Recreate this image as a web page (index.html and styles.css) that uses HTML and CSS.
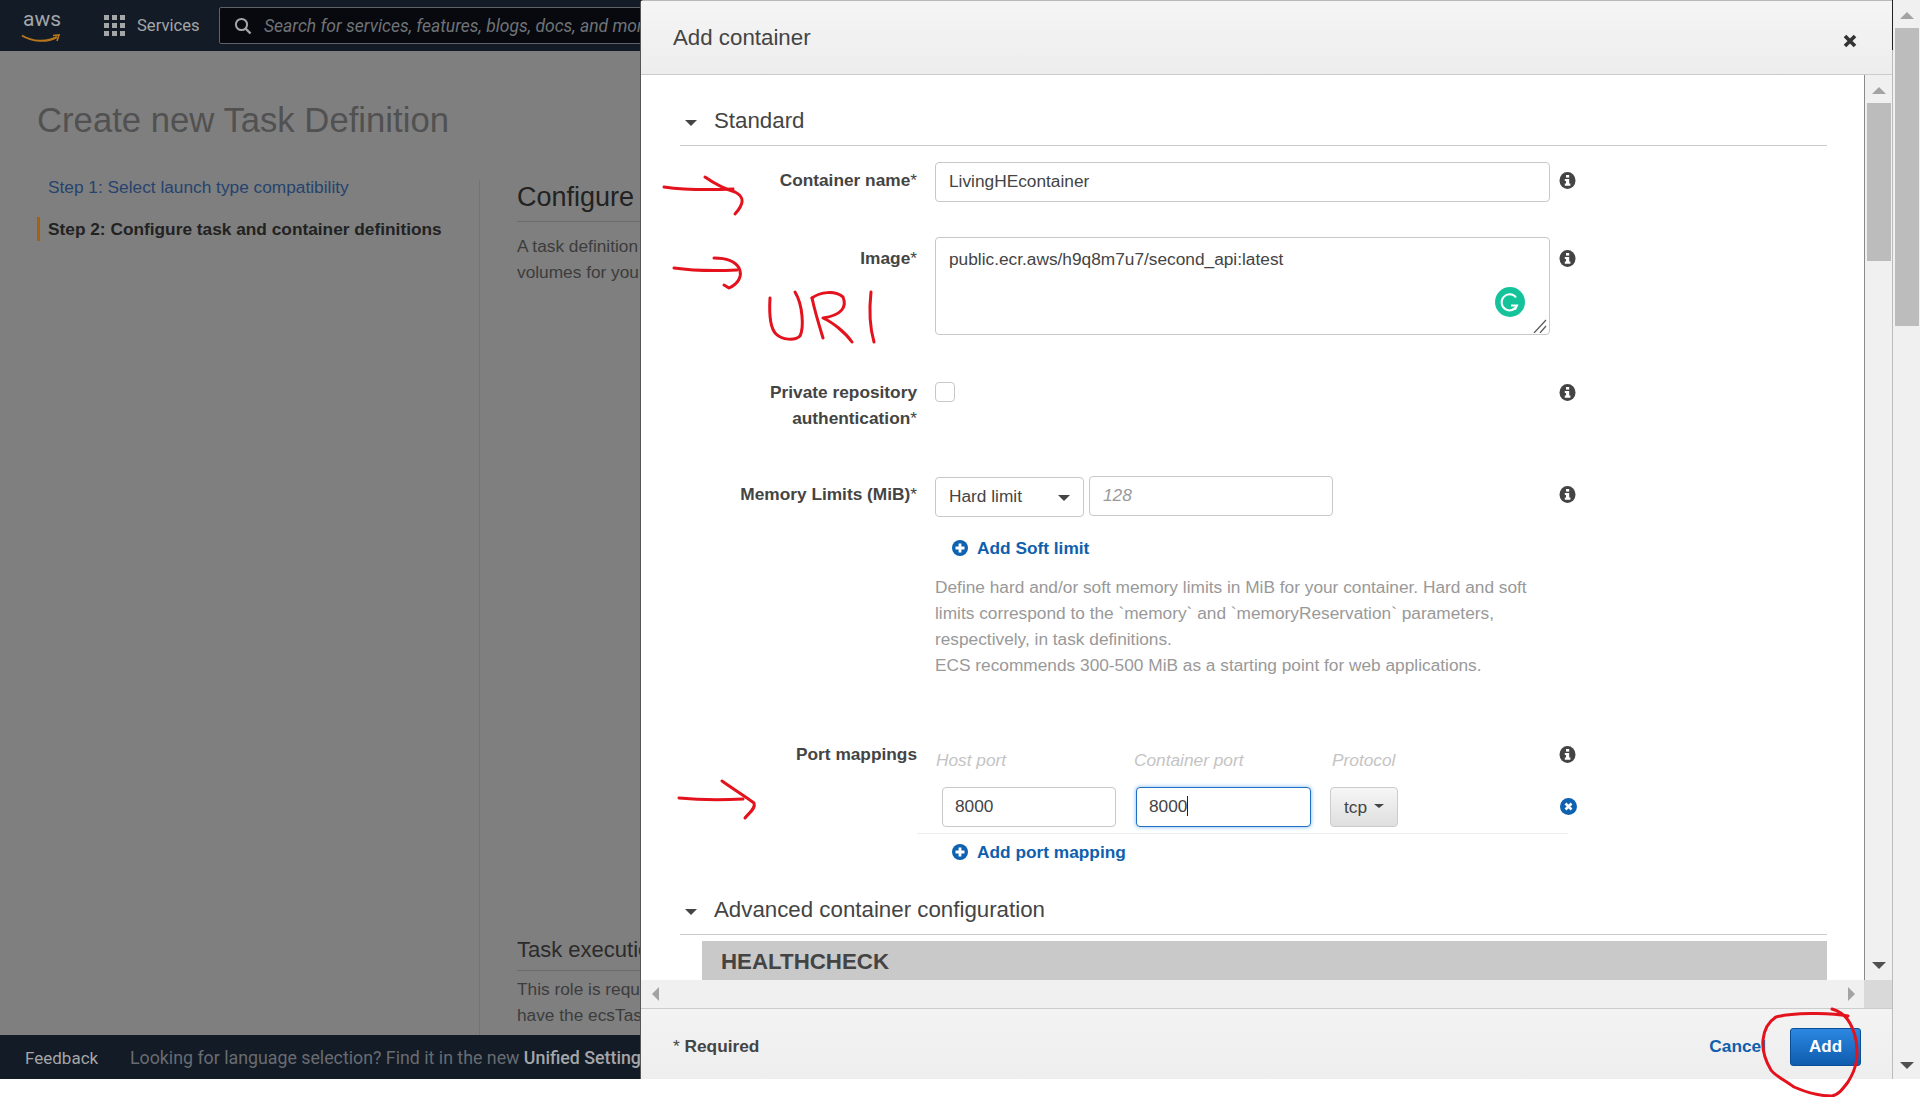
FILE: index.html
```html
<!DOCTYPE html>
<html lang="en">
<head>
    <meta charset="UTF-8">
    <title>Create new Task Definition</title>
    <link rel="stylesheet" href="styles.css">
</head>
<body>
    <div class="app">
        <header class="topbar">
            <div class="logo">
                <span class="logo-text">aws</span>
                <svg class="logo-smile" width="40" height="9" viewBox="0 0 40 9"><path d="M1 1.5C11 8 26 8.5 36 3" fill="none" stroke="#b8761c" stroke-width="2"/><path d="M32 1.5l6-.5-2 6" fill="none" stroke="#b8761c" stroke-width="1.6"/></svg>
            </div>
            <svg class="grid-icon" width="21" height="21" viewBox="0 0 21 21" fill="#a4a6a8">
                <rect width="5" height="5"/><rect x="8" width="5" height="5"/><rect x="16" width="5" height="5"/>
                <rect y="8" width="5" height="5"/><rect x="8" y="8" width="5" height="5"/><rect x="16" y="8" width="5" height="5"/>
                <rect y="16" width="5" height="5"/><rect x="8" y="16" width="5" height="5"/><rect x="16" y="16" width="5" height="5"/>
            </svg>
            <span class="services">Services</span>
            <div class="searchbox">
                <svg width="18" height="18" viewBox="0 0 18 18"><circle cx="7.5" cy="7.5" r="5.6" fill="none" stroke="#a4a6a8" stroke-width="2"/><path d="M11.5 11.5L16.5 16.5" stroke="#a4a6a8" stroke-width="2.4"/></svg>
                <span class="search-hint">Search for services, features, blogs, docs, and mor</span>
            </div>
        </header>

        <main class="main">
            <h1 class="page-title">Create new Task Definition</h1>
            <div class="columns">
                <nav class="steps">
                    <a class="step">Step 1: Select launch type compatibility</a>
                    <a class="step step-active">Step 2: Configure task and container definitions</a>
                </nav>
                <section class="wizard">
                    <h2 class="wizard-title">Configure</h2>
                    <p class="wizard-text">A task definition<br>volumes for your</p>
                    <h3 class="wizard-sub">Task execution</h3>
                    <p class="wizard-text wizard-text-tight">This role is required<br>have the ecsTask</p>
                </section>
            </div>
        </main>

        <footer class="bottombar">
            <span class="feedback">Feedback</span>
            <span class="lang-note">Looking for language selection? Find it in the new <b>Unified Settings</b></span>
        </footer>

        <div class="overlay">
            <div class="modal">
                <div class="modal-head">
                    <span class="modal-title">Add container</span>
                    <svg class="modal-close" width="14" height="14" viewBox="0 0 14 14"><path d="M2 2L12 12M12 2L2 12" stroke="#333" stroke-width="3.6"/></svg>
                </div>

                <div class="modal-mid">
                    <div class="modal-left">
                        <div class="modal-content">
                            <div class="section-head section-first"><i class="arrow-down"></i>Standard</div>

                            <div class="row">
                                <label class="row-label">Container name<span class="star">*</span></label>
                                <div class="field"><input class="text-input" type="text" value="LivingHEcontainer"></div>
                                <svg class="info" viewBox="0 0 17 17"><use href="#icon-info"/></svg>
                            </div>

                            <div class="row row-image">
                                <label class="row-label">Image<span class="star">*</span></label>
                                <div class="field field-rel">
                                    <textarea class="text-area">public.ecr.aws/h9q8m7u7/second_api:latest</textarea>
                                    <svg class="grammarly" width="30" height="30" viewBox="0 0 30 30"><circle cx="15" cy="15" r="15" fill="#15c39a"/><path d="M21 10.5A8 8 0 1 0 22 18.5H16M22 18.5l-2 4" fill="none" stroke="#fff" stroke-width="2"/></svg>
                                    <svg class="grip" width="14" height="14" viewBox="0 0 14 14"><path d="M1 14L13 1M7 14L13 7" stroke="#555" stroke-width="1.2"/></svg>
                                </div>
                                <svg class="info" viewBox="0 0 17 17"><use href="#icon-info"/></svg>
                            </div>

                            <div class="row row-private">
                                <label class="row-label">Private repository authentication<span class="star">*</span></label>
                                <div class="field"><span class="checkbox"></span></div>
                                <svg class="info" viewBox="0 0 17 17"><use href="#icon-info"/></svg>
                            </div>

                            <div class="row row-memory">
                                <label class="row-label">Memory Limits (MiB)<span class="star">*</span></label>
                                <div class="field field-memory">
                                    <div class="select-box">Hard limit<i class="arrow-down arrow-select"></i></div>
                                    <input class="text-input limit-input" type="text" placeholder="128">
                                </div>
                                <svg class="info" viewBox="0 0 17 17"><use href="#icon-info"/></svg>
                            </div>
                            <a class="add-link add-soft"><svg width="16" height="16" viewBox="0 0 16 16"><use href="#icon-plus"/></svg>Add Soft limit</a>
                            <p class="help-text">Define hard and/or soft memory limits in MiB for your container. Hard and soft limits correspond to the `memory` and `memoryReservation` parameters, respectively, in task definitions.<br>ECS recommends 300-500 MiB as a starting point for web applications.</p>

                            <div class="row row-ports">
                                <label class="row-label">Port mappings</label>
                                <div class="field port-head">
                                    <span class="port-col port-col-host">Host port</span>
                                    <span class="port-col port-col-container">Container port</span>
                                    <span class="port-col">Protocol</span>
                                </div>
                                <svg class="info" viewBox="0 0 17 17"><use href="#icon-info"/></svg>
                            </div>
                            <div class="port-row">
                                <input class="text-input port-host" type="text" value="8000">
                                <div class="text-input port-focus">8000<span class="caret"></span></div>
                                <div class="proto-btn">tcp<i class="arrow-down arrow-small"></i></div>
                                <svg class="port-remove" width="17" height="17" viewBox="0 0 17 17"><circle cx="8.5" cy="8.5" r="8.5" fill="#0f62b0"/><path d="M5.5 5.5l6 6M11.5 5.5l-6 6" stroke="#fff" stroke-width="2.6"/></svg>
                            </div>
                            <a class="add-link add-port"><svg width="16" height="16" viewBox="0 0 16 16"><use href="#icon-plus"/></svg>Add port mapping</a>

                            <div class="section-head section-adv"><i class="arrow-down"></i>Advanced container configuration</div>
                            <div class="band">HEALTHCHECK</div>
                        </div>
                        <div class="hbar"><i class="tri-left"></i><i class="tri-right"></i></div>
                    </div>
                    <div class="vbar vbar-inner">
                        <i class="tri-up"></i>
                        <div class="thumb thumb-inner"></div>
                        <i class="tri-down"></i>
                        <div class="vbar-corner"></div>
                    </div>
                </div>

                <div class="modal-foot">
                    <span class="required">* <b>Required</b></span>
                    <a class="cancel">Cancel</a>
                    <button class="add-btn" type="button">Add</button>
                </div>
            </div>

            <div class="vbar vbar-outer">
                <i class="tri-up"></i>
                <div class="thumb thumb-outer"></div>
                <i class="tri-down"></i>
            </div>
        </div>

        <!-- hand drawn marks on the screenshot -->
        <svg class="marks" width="1920" height="1097" viewBox="0 0 1920 1097">
            <path d="M664 187C685 190 710 190 733 189"/>
            <path d="M705 177C715 184 725 189 735 192C745 197 744 204 735 214"/>
            <path d="M674 268C695 271 715 271 737 270"/>
            <path d="M714 258C725 258 735 261 739 268C743 276 738 284 729 288L724 285"/>
            <path d="M770 298C769 315 770 328 776 334C782 340 795 341 800 336C804 328 803 305 795 292"/>
            <path d="M812 298C815 312 819 325 823 338"/>
            <path d="M812 298C820 292 835 290 843 297C847 307 842 315 823 318C832 322 845 332 852 342"/>
            <path d="M871 292C869 310 870 328 874 342"/>
            <path d="M679 798C700 800 722 800 743 799"/>
            <path d="M722 781C733 789 745 796 754 803C756 808 750 812 745 818"/>
            <path d="M1832 1009C1845 1013 1852 1022 1856 1040C1858 1055 1858 1066 1848 1082C1842 1090 1838 1095 1832 1096C1818 1096 1803 1091 1794 1087C1785 1080 1775 1076 1771 1070C1765 1060 1762 1050 1763 1040C1764 1030 1768 1022 1776 1017C1790 1013 1830 1012 1848 1016"/>
        </svg>
    </div>

    <svg width="0" height="0" class="defs">
        <symbol id="icon-info" viewBox="0 0 17 17">
            <ellipse cx="8.5" cy="8.5" rx="8" ry="8.5" fill="#444"/>
            <rect x="7" y="3" width="3.2" height="2.6" fill="#fff"/>
            <path d="M5.8 7h4.4v4.6h1.2v2.2H5.8v-2.2h1.2V9H5.8z" fill="#fff"/>
        </symbol>
        <symbol id="icon-plus" viewBox="0 0 16 16">
            <circle cx="8" cy="8" r="8" fill="#0f62b0"/>
            <path d="M8 3.5v9M3.5 8h9" stroke="#fff" stroke-width="2.8"/>
        </symbol>
    </svg>
</body>
</html>
```

FILE: styles.css
```css
* {
    box-sizing: border-box;
}
html, body {
    margin: 0;
    padding: 0;
    background: #fff;
}
body {
    font-family: "Liberation Sans", Arial, sans-serif;
    font-size: 17.3px;
    color: #444;
    height: 1097px;
    overflow: hidden;
}
.defs {
    position: absolute;
}
.app {
    position: relative;
    width: 1920px;
    height: 1079px;
    display: flex;
    flex-direction: column;
}

/* top bar */
.topbar {
    height: 51px;
    background: #131b27;
    display: flex;
    align-items: center;
    font-family: Roboto, sans-serif;
    color: #a4a6a8;
}
.logo {
    width: 104px;
    padding-left: 23px;
    height: 36px;
    position: relative;
}
.logo-text {
    font-size: 21px;
    line-height: 23px;
    display: block;
    color: #a4a6a8;
}
.logo-smile {
    position: absolute;
    left: 21px;
    top: 26px;
}
.services {
    margin-left: 12px;
    font-size: 16.6px;
    width: 82px;
}
.searchbox {
    flex: 1;
    height: 37px;
    background: #07090e;
    border: 1px solid #5f6368;
    border-radius: 2px;
    display: flex;
    align-items: center;
    padding-left: 14px;
    gap: 12px;
    overflow: hidden;
}
.search-hint {
    font-style: italic;
    font-size: 17.5px;
    color: #6f7377;
    white-space: nowrap;
}

/* dimmed page behind the modal */
.main {
    flex: 1;
    background: #7f7f7f;
    display: flex;
    flex-direction: column;
    min-height: 0;
}
.page-title {
    margin: 49px 0 34px 37px;
    font-size: 34.7px;
    line-height: 40px;
    font-weight: normal;
    color: #515151;
}
.columns {
    flex: 1;
    display: flex;
    min-height: 0;
}
.steps {
    width: 479px;
    padding-left: 37px;
}
.step {
    display: block;
    border-left: 3px solid transparent;
    padding-left: 8px;
    line-height: 26px;
    color: #26436e;
}
.step-active {
    margin-top: 17px;
    line-height: 24px;
    border-left-color: #a3620f;
    font-weight: bold;
    color: #222;
}
.wizard {
    flex: 1;
    margin-top: 6px;
    border-left: 1px solid #737373;
    padding-left: 37px;
    white-space: nowrap;
    overflow: hidden;
}
.wizard-title {
    margin: 0;
    font-size: 27px;
    line-height: 34px;
    padding-bottom: 7px;
    font-weight: normal;
    color: #222;
    border-bottom: 1px solid #6c6c6c;
}
.wizard-text {
    margin: 11px 0 0;
    line-height: 26px;
    color: #3c3c3c;
}
.wizard-text-tight {
    margin-top: 5px;
}
.wizard-sub {
    margin: 650px 0 0;
    font-size: 22px;
    line-height: 30px;
    padding-bottom: 5px;
    font-weight: normal;
    color: #2b2b2b;
    border-bottom: 1px solid #6c6c6c;
}

.bottombar {
    height: 44px;
    background: #131b27;
    display: flex;
    align-items: center;
    padding: 1px 0 0 25px;
    font-family: Roboto, sans-serif;
    font-size: 17.8px;
}
.feedback {
    color: #a4a6a8;
    font-size: 17px;
    width: 105px;
}
.lang-note {
    color: #686c71;
    white-space: nowrap;
}
.lang-note b {
    color: #a4a6a8;
    font-weight: 500;
}

/* modal */
.overlay {
    position: absolute;
    left: 641px;
    top: 0;
    width: 1279px;
    height: 1079px;
    display: flex;
}
.modal {
    width: 1251px;
    background: #fff;
    border-top: 1px solid #b8b8b8;
    border-radius: 3px 0 0 0;
    box-shadow: -1px 0 0 #555;
    display: flex;
    flex-direction: column;
}
.modal-head {
    height: 74px;
    flex-shrink: 0;
    background: linear-gradient(#f5f5f5, #ededed);
    border-bottom: 1px solid #ccc;
    display: flex;
    align-items: center;
    justify-content: space-between;
    padding: 0 35px 0 32px;
}
.modal-title {
    font-size: 22.3px;
    color: #444;
}
.modal-close {
    margin-top: 6px;
}
.modal-mid {
    flex: 1;
    display: flex;
    min-height: 0;
}
.modal-left {
    flex: 1;
    display: flex;
    flex-direction: column;
    min-width: 0;
}
.modal-content {
    flex: 1;
    overflow: hidden;
    min-height: 0;
}
.modal-foot {
    height: 71px;
    flex-shrink: 0;
    background: linear-gradient(#f3f3f3, #eee);
    border-top: 1px solid #ccc;
    display: flex;
    align-items: center;
    padding: 5px 31px 0 32px;
}
.required {
    flex: 1;
}
.cancel {
    color: #0f5fad;
    font-weight: bold;
    margin-right: 24px;
}
.add-btn {
    width: 71px;
    height: 38px;
    border: 1px solid #0b4e96;
    border-radius: 3px;
    background: linear-gradient(#2c88e2, #0f5cae);
    color: #fff;
    font: bold 17px "Liberation Sans", Arial, sans-serif;
}

/* form */
.section-head {
    margin-left: 39px;
    width: 1147px;
    padding: 1px 0 9px 5px;
    font-size: 22.3px;
    line-height: 30px;
    color: #444;
    border-bottom: 1px solid #ccc;
    display: flex;
    align-items: center;
}
.section-first {
    margin-top: 30px;
}
.section-adv {
    margin-top: 29px;
}
.section-head .arrow-down {
    margin: 4px 17px 0 0;
}
.arrow-down {
    display: inline-block;
    width: 0;
    height: 0;
    border-left: 6px solid transparent;
    border-right: 6px solid transparent;
    border-top: 6px solid #444;
}
.row {
    display: flex;
    align-items: flex-start;
    margin-top: 16px;
}
.row-label {
    width: 276px;
    padding-left: 39px;
    padding-top: 5px;
    text-align: right;
    line-height: 26px;
    font-weight: bold;
    color: #444;
    flex-shrink: 0;
}
.star {
    font-weight: normal;
}
.field {
    width: 615px;
    margin-left: 18px;
    flex-shrink: 0;
}
.field-rel {
    position: relative;
}
.info {
    width: 17px;
    height: 17px;
    margin: 10px 0 0 9px;
    flex-shrink: 0;
}
.text-input, .text-area {
    display: block;
    width: 100%;
    border: 1px solid #c8c8c8;
    border-radius: 4px;
    background: #fff;
    font: 17.3px "Liberation Sans", Arial, sans-serif;
    color: #444;
    outline: none;
}
.text-input {
    height: 40px;
    padding: 0 12px 2px;
}
.field .text-input {
    padding-left: 13px;
}
.text-area {
    height: 98px;
    padding: 9px 13px;
    line-height: 24px;
    resize: none;
}
.grammarly {
    position: absolute;
    right: 25px;
    top: 50px;
}
.grip {
    position: absolute;
    right: 3px;
    bottom: 2px;
}
.row-image {
    margin-top: 35px;
}
.row-image .row-label {
    padding-top: 8px;
}
.row-image .info {
    margin-top: 13px;
}
.row-private {
    margin-top: 44px;
}
.row-private .row-label {
    padding-top: 0;
}
.row-private .info {
    margin-top: 5px;
}
.checkbox {
    display: block;
    width: 20px;
    height: 20px;
    margin-top: 3px;
    border: 1px solid #c8c8c8;
    border-radius: 4px;
}
.row-memory {
    margin-top: 45px;
}
.field-memory {
    display: flex;
    align-items: flex-start;
}
.select-box {
    width: 149px;
    height: 40px;
    margin-top: 1px;
    padding: 0 13px 2px;
    border: 1px solid #c8c8c8;
    border-radius: 4px;
    display: flex;
    align-items: center;
    justify-content: space-between;
}
.arrow-select {
    margin-top: 3px;
}
.limit-input {
    width: 244px;
    margin-left: 5px;
}
.limit-input::placeholder {
    font-style: italic;
    color: #999;
}
.add-link {
    display: flex;
    align-items: center;
    gap: 9px;
    margin-left: 311px;
    line-height: 26px;
    font-weight: bold;
    color: #0f5fad;
}
.add-soft {
    margin-top: 18px;
}
.add-port {
    margin-top: 5px;
}
.help-text {
    margin: 13px 0 0 294px;
    width: 600px;
    line-height: 26px;
    color: #999;
}
.row-ports {
    margin-top: 63px;
}
.row-ports .row-label {
    padding-top: 0;
}
.row-ports .info {
    margin-top: 5px;
}
.port-head {
    display: flex;
    padding-top: 6px;
    padding-bottom: 1px;
    line-height: 26px;
    margin-left: 19px;
    width: 614px;
}
.port-col {
    font-style: italic;
    color: #c4c4c4;
}
.port-col-host {
    width: 198px;
}
.port-col-container {
    width: 198px;
}
.port-row {
    margin: 13px 0 0 276px;
    width: 651px;
    height: 47px;
    padding-left: 25px;
    border-bottom: 1px solid #eee;
    display: flex;
    align-items: flex-start;
}
.port-host {
    width: 174px;
    flex-shrink: 0;
}
.port-focus {
    width: 175px;
    margin-left: 20px;
    flex-shrink: 0;
    border-color: #1f6fc4;
    box-shadow: 0 0 4px #7db8ee;
    display: flex;
    align-items: center;
}
.caret {
    display: inline-block;
    width: 1px;
    height: 20px;
    background: #222;
}
.proto-btn {
    width: 68px;
    height: 40px;
    margin-left: 19px;
    flex-shrink: 0;
    border: 1px solid #ccc;
    border-radius: 4px;
    background: linear-gradient(#f6f6f6, #dfdfdf);
    display: flex;
    align-items: center;
    justify-content: center;
    gap: 7px;
    color: #444;
}
.arrow-small {
    border-left-width: 5px;
    border-right-width: 5px;
    border-top-width: 4px;
    margin-top: -2px;
}
.port-remove {
    margin: 11px 0 0 162px;
    flex-shrink: 0;
}
.band {
    margin: 6px 0 0 61px;
    width: 1125px;
    height: 60px;
    padding-left: 19px;
    background: #c9c9c9;
    font-size: 22.3px;
    line-height: 41px;
    font-weight: bold;
    color: #444;
}

/* scroll bars */
.hbar {
    height: 28px;
    flex-shrink: 0;
    background: #f0f0f0;
    display: flex;
    align-items: center;
    justify-content: space-between;
    padding: 0 9px 0 11px;
}
.tri-left, .tri-right {
    width: 0;
    height: 0;
    border-top: 7px solid transparent;
    border-bottom: 7px solid transparent;
}
.tri-left {
    border-right: 7px solid #a3a3a3;
}
.tri-right {
    border-left: 7px solid #a3a3a3;
}
.vbar {
    width: 28px;
    flex-shrink: 0;
    background: #f0f0f0;
    display: flex;
    flex-direction: column;
    align-items: center;
}
.tri-up, .tri-down {
    width: 0;
    height: 0;
    border-left: 7px solid transparent;
    border-right: 7px solid transparent;
}
.tri-up {
    border-bottom: 7px solid #a3a3a3;
}
.tri-down {
    border-top: 7px solid #505050;
}
.thumb {
    background: #bcbcbc;
}
.vbar-inner {
    border-left: 1px solid #8a8a8a;
    padding-top: 12px;
}
.thumb-inner {
    width: 24px;
    height: 158px;
    margin-top: 9px;
    margin-left: 1px;
}
.vbar-inner .tri-down {
    margin-top: auto;
    margin-bottom: 11px;
}
.vbar-corner {
    width: 28px;
    height: 28px;
    background: #d9d9d9;
    margin-left: -1px;
}
.vbar-outer {
    border-left: 1px solid #bbb;
    border-image: linear-gradient(#222 51px, #bbb 51px) 1;
    padding-top: 12px;
}
.thumb-outer {
    width: 24px;
    height: 298px;
    margin-top: 9px;
}
.vbar-outer .tri-down {
    margin-top: auto;
    margin-bottom: 10px;
}

.marks {
    position: absolute;
    left: 0;
    top: 0;
    pointer-events: none;
}
.marks path {
    fill: none;
    stroke: #e3121c;
    stroke-width: 3;
    stroke-linecap: round;
    stroke-linejoin: round;
}
```
